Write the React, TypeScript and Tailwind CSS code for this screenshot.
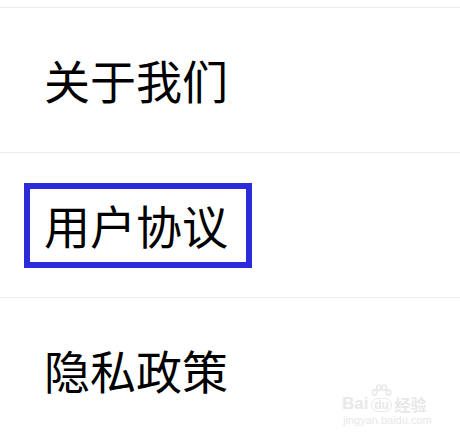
import React from "react";

const font = { fontFamily: '"Noto Sans CJK SC", "Noto Sans", sans-serif' };
const latin = { fontFamily: '"Liberation Sans", sans-serif' };

function Row({ label, boxed }: { label: string; boxed?: boolean }) {
  return (
    <div className="relative h-[145px] border-b border-[#ececec] flex items-center pl-[44px]">
      <span className="text-[46px] leading-none text-black -translate-y-[1px]" style={font}>
        {label}
      </span>
      {boxed && (
        <div className="absolute left-[24px] top-[30px] w-[228px] h-[85px] border-[6px] border-[#2b2bd9]" />
      )}
    </div>
  );
}

export default function App() {
  return (
    <div className="w-[460px] h-[440px] bg-white relative overflow-hidden">
      <div className="h-[8px] border-b border-[#ececec]" />
      <Row label="关于我们" />
      <Row label="用户协议" boxed />
      <Row label="隐私政策" />
      <div className="absolute left-[342px] top-[384px] flex flex-col items-start text-[#e8e8e8] select-none">
        <div className="flex items-end gap-[1px]">
          <span className="text-[17px] font-bold leading-none" style={latin}>
            Bai
          </span>
          <span className="relative flex flex-col items-center">
            <svg width="24" height="16" viewBox="0 0 22 15" className="mb-[-2px]">
              <g fill="none" stroke="#e8e8e8" strokeWidth="1.5">
                <ellipse cx="5" cy="8" rx="2" ry="2.5" />
                <ellipse cx="9" cy="3.5" rx="2" ry="2.5" />
                <ellipse cx="14" cy="3.5" rx="2" ry="2.5" />
                <ellipse cx="18" cy="8" rx="2" ry="2.5" />
              </g>
            </svg>
            <span className="text-[12px] font-bold leading-none border-[1.5px] border-[#e8e8e8] rounded-full px-[2px]" style={latin}>
              du
            </span>
          </span>
          <span className="text-[16px] font-bold leading-none" style={font}>
            经验
          </span>
        </div>
        <span className="text-[11px] leading-none mt-[3px] ml-[1px]" style={latin}>
          jingyan.baidu.com
        </span>
      </div>
    </div>
  );
}
